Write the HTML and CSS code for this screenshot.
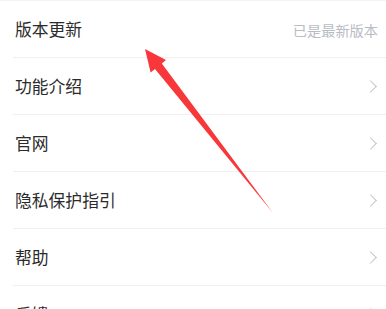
FILE: index.html
```html
<!DOCTYPE html>
<html lang="zh-CN">
<head>
    <meta charset="UTF-8">
    <meta name="viewport" content="width=device-width, initial-scale=1.0">
    <title>设置</title>
    <link rel="stylesheet" href="styles.css">
</head>
<body>
    <div class="settings">
        <div class="item">
            <span class="label">版本更新</span>
            <span class="note">已是最新版本</span>
        </div>
        <div class="item">
            <span class="label">功能介绍</span>
            <span class="chevron"></span>
        </div>
        <div class="item">
            <span class="label">官网</span>
            <span class="chevron"></span>
        </div>
        <div class="item">
            <span class="label">隐私保护指引</span>
            <span class="chevron"></span>
        </div>
        <div class="item">
            <span class="label">帮助</span>
            <span class="chevron"></span>
        </div>
        <div class="item">
            <span class="label">反馈</span>
            <span class="chevron"></span>
        </div>
    </div>

    <!-- red annotation arrow pointing at the first row -->
    <svg class="arrow" width="386" height="309" viewBox="0 0 386 309">
        <polygon points="145,49 166,60 161.8,63.5 273,213 155,68.9 150.6,72.5" fill="#f8373a"/>
    </svg>
</body>
</html>
```

FILE: styles.css
```css
body {
    margin: 0;
    padding: 0;
    background-color: #ffffff;
    font-family: "Noto Sans CJK SC", "Noto Sans", sans-serif;
    overflow: hidden;
}
.settings {
    border-top: 1px solid #f1f5f9;
}
.item {
    display: flex;
    align-items: center;
    justify-content: space-between;
    height: 56px;
    margin-left: 13px;
    padding: 0 8px 0 2px;
    border-bottom: 1px solid #f0f0f0;
}
.label {
    font-size: 16.8px;
    color: #2b2b2b;
    margin-top: -1px;
}
.note {
    font-size: 14.2px;
    color: #b9bcc3;
    margin-top: 2px;
}
.chevron {
    width: 8px;
    height: 8px;
    border-top: 1.6px solid #c4c4c4;
    border-right: 1.6px solid #c4c4c4;
    transform: rotate(45deg);
    margin-right: 3px;
    margin-top: 1px;
}
.arrow {
    position: absolute;
    left: 0;
    top: 0;
}
```
